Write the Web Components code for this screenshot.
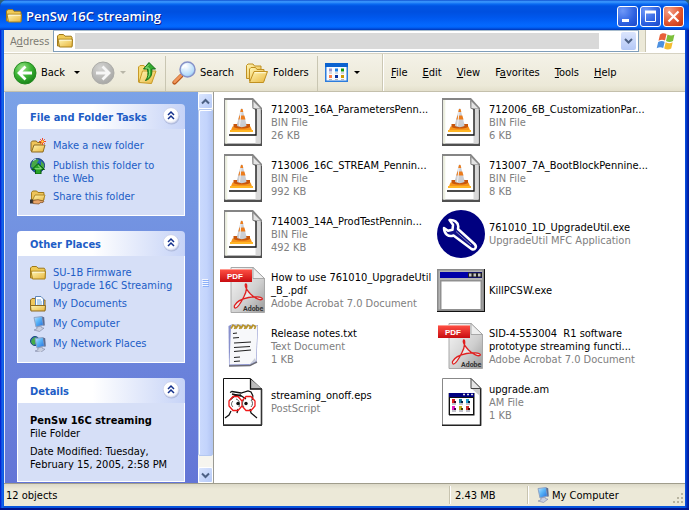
<!DOCTYPE html>
<html lang="en">
<head>
<meta charset="utf-8">
<title>PenSw 16C streaming</title>
<style>
html,body{margin:0;height:100%;background:#2c5f78}
body{font:11px/13px "DejaVu Sans Condensed","DejaVu Sans","Noto Sans",sans-serif;color:#000;overflow:hidden}
</style>
</head>
<body>
<xp-window caption="PenSw 16C streaming">
  <xp-addressbar slot="bars"></xp-addressbar>
  <xp-toolbar slot="bars"></xp-toolbar>
  <xp-sidebar>
    <xp-panel caption="File and Folder Tasks">
      <xp-link icon="newfolder">Make a new folder</xp-link>
      <xp-link icon="globe">Publish this folder to<br>the Web</xp-link>
      <xp-link icon="share">Share this folder</xp-link>
    </xp-panel>
    <xp-panel caption="Other Places">
      <xp-link icon="folder">SU-1B Firmware<br>Upgrade 16C Streaming</xp-link>
      <xp-link icon="docs">My Documents</xp-link>
      <xp-link icon="computer">My Computer</xp-link>
      <xp-link icon="network">My Network Places</xp-link>
    </xp-panel>
    <xp-panel caption="Details">
      <xp-details>
        <b slot="name">PenSw 16C streaming</b>
        <span slot="kind">File Folder</span>
        <span slot="date">Date Modified: Tuesday,<br>February 15, 2005, 2:58 PM</span>
      </xp-details>
    </xp-panel>
  </xp-sidebar>
  <xp-scrollbar></xp-scrollbar>
  <xp-files>
    <xp-file icon="cone" kind="BIN File" size="26 KB">712003_16A_ParametersPenn...</xp-file>
    <xp-file icon="cone" kind="BIN File" size="6 KB">712006_6B_CustomizationPar...</xp-file>
    <xp-file icon="cone" kind="BIN File" size="992 KB">713006_16C_STREAM_Pennin...</xp-file>
    <xp-file icon="cone" kind="BIN File" size="8 KB">713007_7A_BootBlockPennine...</xp-file>
    <xp-file icon="cone" kind="BIN File" size="492 KB">714003_14A_ProdTestPennin...</xp-file>
    <xp-file icon="wrench" kind="UpgradeUtil MFC Application">761010_1D_UpgradeUtil.exe</xp-file>
    <xp-file icon="pdf" kind="Adobe Acrobat 7.0 Document">How to use 761010_UpgradeUtil<br>_B_.pdf</xp-file>
    <xp-file icon="app">KillPCSW.exe</xp-file>
    <xp-file icon="notes" kind="Text Document" size="1 KB">Release notes.txt</xp-file>
    <xp-file icon="pdf" kind="Adobe Acrobat 7.0 Document">SID-4-553004&nbsp; R1 software<br>prototype streaming functi...</xp-file>
    <xp-file icon="eps" kind="PostScript">streaming_onoff.eps</xp-file>
    <xp-file icon="am" kind="AM File" size="1 KB">upgrade.am</xp-file>
  </xp-files>
  <xp-statusbar slot="status"></xp-statusbar>
</xp-window>

<script>
const FOLDER = `<path d="M.5 13V3l1.500-1.500h4.500L8 3.200h6.200l.8 1V13z" fill="#f0ca56" stroke="#a07a1c"/><path d="M2.500 14L1 6.200h14.500L15 14z" fill="url(#fy)" stroke="#a8801c"/><path d="M2.500 7.200h12" stroke="#fffbe0"/>`;
const FY = `<defs><linearGradient id="fy" x2="1" y2="1"><stop stop-color="#fff6b4"/><stop offset="1" stop-color="#e8b53c"/></linearGradient></defs>`;
const MONITOR = `<path d="M4 1.500l8-1 1.500 8.500-7.500 2z" fill="url(#mb)" stroke="#8fa3c4"/><path d="M12 .5l2.200.8.6 8-1.300.7z" fill="#5a6c94"/><path d="M7 11l4-1 .5 1.500 2.500.7-4.500 3.300L4 14l2.800-1z" fill="#c9cfe0" stroke="#7d86a4" stroke-width=".6"/>`;
const MB = `<defs><linearGradient id="mb" x2="1" y2="1"><stop stop-color="#bfe6ff"/><stop offset=".45" stop-color="#58b4f8"/><stop offset="1" stop-color="#2468d8"/></linearGradient></defs>`;
const gem = (x, y, c, d) => `<path d="M${x} ${y}h3v4h-3z" fill="${c}"/><path d="M${x + 2} ${y + 2}h2v2h-2z" fill="${d}"/><path d="M${x} ${y + 5}h4" stroke="#889"/>`;
const ICONS = {
  folder: [16, 16, FY + FOLDER],
  newfolder: [16, 16, FY + `<path d="M1 13V4.500L2.300 3h4l1.200 1.500h5V13z" fill="#eec45a" stroke="#8d6b22"/><path d="M1.500 14L4 7h11l-2 7z" fill="url(#fy)" stroke="#8d6b22"/><path d="M12.500 0v7M9 3.500h7M10.200 1.200l4.600 4.600M14.800 1.200l-4.600 4.600" stroke="#f04828"/><circle cx="12.500" cy="3.500" r="1.200" fill="#ffd94a"/>`],
  share: [16, 16, FY + `<path d="M1.500 11V3.500L2.700 2h4l1.200 1.500h6V11z" fill="#eec45a" stroke="#a07a1c"/><path d="M2.500 11L5 6h10l-2 6z" fill="url(#fy)" stroke="#b08a28"/><path d="M0 10.500h3v4H0z" fill="#333"/><path d="M3 11.500l5-.8 6 1.500-1 1.300-3 .2-1 1.300-6-.5z" fill="#e8a56a" stroke="#7a4a20" stroke-width=".7"/>`],
  globe: [16, 16, `<circle cx="7.500" cy="7.500" r="7" fill="#245fb8" stroke="#163a70"/><path d="M2 4l4-3 3 1-2 3 1 2-4 3-3-1zM11 3l3 3v4l-3-1z" fill="#48a848"/><path d="M3 2.500l3-1.500" stroke="#cfe8ff"/><path d="M8 5.500l6.500 6H11V16H5.500v-4.500h-3.500z" fill="#28a428" stroke="#075c0e"/><path d="M8 7.500l3.500 3.300H4.800" stroke="#9be88c" fill="none"/>`],
  docs: [16, 16, FY + `<path d="M.5 14V4L2 2.500h3L6 4h9v10z" fill="#efc75c" stroke="#8d6b22"/><path d="M5.500.5h5.500l2.500 2.500v8h-8z" fill="#fff" stroke="#5f86b8"/><path d="M7 4h4M7 6h5M7 8h5" stroke="#6fa8e4"/><path d="M1 15l-.5-5.500h15L15 15z" fill="url(#fy)" stroke="#8d6b22"/>`],
  computer: [16, 16, MB + MONITOR],
  network: [16, 16, MB + `<circle cx="5" cy="5" r="4.500" fill="#2c68c0" stroke="#1c4480"/><path d="M2 3l3-2 2 1-2 3 1 3-3 1-2-3z" fill="#44ac48"/><g transform="translate(1 1)">${MONITOR}</g>`],
  back: [24, 24, `<defs><radialGradient id="gback" cx=".38" cy=".28" r=".8"><stop stop-color="#9be48a"/><stop offset=".5" stop-color="#3cb434"/><stop offset="1" stop-color="#127a14"/></radialGradient></defs><circle cx="12" cy="12" r="11" fill="url(#gback)" stroke="#238a20"/><path d="M12.500 5.500L6 12l6.500 6.500M6.500 12H19" fill="none" stroke="#fff" stroke-width="2.800"/>`],
  fwd: [24, 24, `<defs><radialGradient id="gfwd" cx=".38" cy=".28" r=".8"><stop stop-color="#d4d4d2"/><stop offset="1" stop-color="#a4a4a2"/></radialGradient></defs><circle cx="12" cy="12" r="11" fill="url(#gfwd)" stroke="#acaca8"/><path d="M11.500 5.500L18 12l-6.500 6.500M17.500 12H5" fill="none" stroke="#f6f6f6" stroke-width="2.800"/>`],
  up: [20, 22, FY + `<path d="M1.500 20V5l1.500-1.500h4L8.500 6H14v14z" fill="#f6dc78" stroke="#c79a28"/><path d="M2 20.500L5.500 9H19l-4.500 12.500z" fill="url(#fy)" stroke="#c79a28"/><path d="M12 .5L18.500 7h-3.700c.5 6-1.300 10-6.300 11.500 2.500-3 3-6 2-11.500H6.500z" fill="#34ac30" stroke="#126a12"/><path d="M12 2.500L8.500 6h3.500c1 4 .8 7-.8 9.500" fill="none" stroke="#94e080"/>`],
  search: [24, 24, `<defs><radialGradient id="glens" cx=".4" cy=".3" r=".8"><stop stop-color="#fff"/><stop offset=".7" stop-color="#b6dcfa"/><stop offset="1" stop-color="#7cb4ec"/></radialGradient></defs><path d="M9 15L2.500 21.500" stroke="#b85418" stroke-width="4.200" stroke-linecap="round"/><path d="M9 14.500L2.500 21" stroke="#f0965a" stroke-width="2.500" stroke-linecap="round"/><circle cx="15.500" cy="8.500" r="7.500" fill="url(#glens)" stroke="#8792c8" stroke-width="1.500"/><path d="M10.500 7.500c.5-2 2-3.500 4-3.700" stroke="#fff" stroke-width="1.500" fill="none"/>`],
  folders: [24, 22, FY + `<path d="M1.500 16.500v-13L3 2h5l1.500 2H16v12.500z" fill="url(#fy)" stroke="#c09020"/><path d="M4.500 19V7L6 5.500h4.500L12 7.500h7V19z" fill="url(#fy)" stroke="#c09020"/><path d="M4.500 20.500L9 9.500h13.500L18.500 20.500z" fill="url(#fy)" stroke="#c09020"/><path d="M9.800 10.700h11" stroke="#fffbe0"/>`],
  views: [24, 20, `<path d="M.75.75h21.500v17.500H.75z" fill="#f8fbff" stroke="#2c7cdc" stroke-width="1.500"/><path d="M0 0h23v4H0z" fill="#0a62d0"/><path d="M4 5.500h3v3H4z" fill="#9a94cc"/><path d="M10 5.500h3v3h-3z" fill="#1c80e4"/><path d="M16 5.500h3v3h-3z" fill="#10960c"/><path d="M4 12h3v3H4z" fill="#ff7c44"/><path d="M10 12h3v3h-3z" fill="#0a30a0"/><path d="M16 12h3v3h-3z" fill="#d09a00"/><path d="M4 10h3m3 0h3m3 0h3M4 16.500h3m3 0h3m3 0h3" stroke="#b4b4bc"/>`],
  flag: [20, 18, `<path d="M4 2.500C6.500.5 8.500 1 10.500 2L9 8.500c-2-1-4-1.200-6.500.3z" fill="#e8603a"/><path d="M11.500 2.500c2.500 1.200 4.500 1.300 7 0L17 9c-2.500 1.300-4.500 1.200-7 0z" fill="#7cbf3c"/><path d="M2.200 10c2.500-1.500 4.500-1.200 6.500-.3L7.200 16c-2-1-4-1.200-6.500.3z" fill="#4c90e0"/><path d="M9.700 10.200c2.500 1.200 4.500 1.300 7 0L15.200 16.500c-2.500 1.300-4.500 1.200-7 0z" fill="#f4bc30"/>`],
  chevrons: [18, 18, `<defs><radialGradient id="gchev" cx=".45" cy=".4" r=".6"><stop offset=".7" stop-color="#fff"/><stop offset="1" stop-color="#dfe3f2"/></radialGradient></defs><circle cx="9.500" cy="9.500" r="8" fill="#9aa6cc" opacity=".6"/><circle cx="9" cy="8.500" r="7.800" fill="url(#gchev)" stroke="#c4cae4" stroke-width=".6"/><path d="M6 8l3-3 3 3M6 12l3-3 3 3" fill="none" stroke="#13308c" stroke-width="1.500"/>`],
  cone: [48, 48, `<path d="M5 0h29l9 10v38H5z" fill="#858585"/><path d="M5 45.500h38V48H5zM41.500 12H43v34h-1.500z" fill="#505050"/><path d="M6.300 2H33l8.500 10v33.500H6.300z" fill="#fff"/><path d="M6.300 2h2v43.500h-2z" fill="#edf0e0"/><path d="M33 2l8.500 9v5l-8-6z" fill="#9a9a9a"/><path d="M34 2.500l8 8h-8z" fill="#e4e4e4" stroke="#777" stroke-width=".8"/><path d="M36.500 10.500h5v35h-5z" fill="#d8d8d8"/><path d="M10 37h27V11" fill="none" stroke="#111" stroke-width="1.300"/><path d="M11.500 33.500l2-5h18l2 5z" fill="#f7941a"/><path d="M11 32h23v2H11z" fill="#ffb626"/><path d="M22 10.500h1.300l4.700 18c-2 2-8.700 2-10.700 0z" fill="#ccced4"/><path d="M22 11h1.500l.8 3h-3zM20.500 17.500h4.800l1.200 4h-7.200z" fill="#ec7c1c"/><path d="M14.500 26h3.500c2 1.500 7 1.500 9 0h4v3c-4 2-12.500 2-16.500 0z" fill="#c8560c"/><path d="M18.500 25c2.500 1.500 6 1.500 8.500 0l.5 3c-3 1.500-6.500 1.500-9.500 0z" fill="#c8ccd2"/><path d="M22 14l-1.500 14" stroke="#f4f4f6"/>`],
  wrench: [48, 48, `<circle cx="24" cy="24" r="24" fill="#000080"/><path d="M12.500 10c4.500-.5 8.500 2 8.800 6.500l-.3 2.500 16.500 15c3 3 .5 6.500-3 5L16.500 25.500c-5 2-9.500-1.500-9.500-7.500l4 2.800 4.500-1 .5-5z" fill="#10108a" stroke="#fff" stroke-width="2.500" stroke-linejoin="round"/><path d="M19 21.500l15 13.500" stroke="#8c8cb8" stroke-width="1"/>`],
  pdf: [48, 48, `<defs><linearGradient id="gpage" x2="1" y2="1"><stop stop-color="#f7f7f7"/><stop offset=".6" stop-color="#cfcfcf"/><stop offset="1" stop-color="#9a9a9a"/></linearGradient><linearGradient id="gtag" x2="0" y2="1"><stop stop-color="#ff5044"/><stop offset="1" stop-color="#c80c10"/></linearGradient></defs><path d="M12 1.500h22l11.500 11V46.500H12z" fill="url(#gpage)" stroke="#a8a8a8"/><path d="M34 1.500l11.500 11H34z" fill="#eee" stroke="#999" stroke-width=".8"/><path d="M15.500 39.500c2-4 7-6.500 14-8 6-1.300 13-.8 14 1.500-1.500 2.200-8-1-12-5-4-4.300-6-8-5-10 2-1 1.500 7-1.500 12.500-3 6-7 12-9 11.500-.8-.3-.8-1.300-.5-2.500z" fill="#fff" fill-opacity=".5" stroke="#e02020" stroke-width="1.300"/><path d="M1 3.500h32v12.500H1z" fill="url(#gtag)"/><path d="M1 3.500h32" stroke="#ff9a90"/><text x="8" y="13" font-family="Liberation Sans" font-weight="bold" font-size="8" fill="#fff">PDF</text><text x="24" y="45" font-family="Roboto,Liberation Sans" font-weight="bold" font-size="7" fill="#333">Adobe</text>`],
  app: [48, 48, `<path d="M0 3h48v43H0z" fill="#111"/><path d="M0 3h47v42H0z" fill="#8a8a8a"/><path d="M1.500 4.500h44v39h-44z" fill="#b4b4b4"/><path d="M3 6h42v6H3z" fill="#0000a8"/><path d="M31 6.500h14v5H31z" fill="#222"/><path d="M32 7.500h2.500v3H32zM36.500 7.500H39v3h-2.500zM41 7.500h2.500v3H41z" fill="#c4c4c4"/><path d="M3 14h42v30H3z" fill="#909090"/><path d="M4.500 15.500h39V43h-39z" fill="#fff"/>`],
  notes: [48, 48, `<path d="M9.500 4l3-1.500L39 3l-1.500 37L30 43l-20 1z" fill="#8890cc"/><path d="M12 3.500h26.500L37 39l-6 3-20.500.5z" fill="#f7f8fa"/><path d="M31 42l6-3-1-3z" fill="#c8ccd8"/><path d="M10 44l21-.5 7-3.500" fill="none" stroke="#6a6a74" stroke-width="1.500"/><path d="M12 6.500l2-3.500 2.500 1.500-1 2.500M17 6.500L19 3l2.500 1.500-1 2.500M22 6.500L24 3l2.500 1.500-1 2.500M27 6.500L29 3l2.500 1.500-1 2.500M32 6.500L34 3l2.500 1.500-1 2.500" fill="none" stroke="#b8942c" stroke-width="1.600"/><path d="M14 11.500l4-.5M14 16l6-.5M15 21l17-1M15 25.500l16-1M15 29.500l17-1.500M15 35.500l6-.5M15 39.500l6-.5" stroke="#222" stroke-width="1.200"/>`],
  eps: [48, 48, `<path d="M4.500.5H31.500L42.500 11v36.500h-38z" fill="#fff" stroke="#111"/><path d="M31.500 1v10H43" fill="#bbb" stroke="#111" stroke-width="1.300"/><path d="M4 47h39M42.500 11v36" stroke="#333" stroke-width="1.600"/><path d="M11 14.500l2-1 9 1.500 7-2 3 1 2 4M13 16l9 2M11 22l5-4.500 6-.5M21 17l6 4M34 18l-1 4M12 33l-2 4-4 3M19 31l-1 4M31 31l1 4 6 5" fill="none" stroke="#111" stroke-width="1.300"/><path d="M14 18.500h5l4 4.500v5l-4 4.500h-5l-4-4.500v-5zM27 18.500h5l4 4.500v5l-4 4.500h-5l-4-4.500v-5z" fill="none" stroke="#f01818" stroke-width="1.300"/><path d="M14 23c-2 2-2 4 0 6M17 21c3 1 4 3 3 8M25 22c-2 2-2 5 0 7M32 22c2 2 2 5 0 7" fill="none" stroke="#555"/><circle cx="19" cy="25.500" r="1.700" fill="#111"/><circle cx="27" cy="25.500" r="1.700" fill="#111"/>`],
  am: [48, 48, `<path d="M5.500.5H34l10 10v37H5.500z" fill="#fff" stroke="#888"/><path d="M5 47.300h39M43.500 11v37" stroke="#222" stroke-width="1.400"/><path d="M34 .5l10 10H34z" fill="#e6e6e6" stroke="#444"/><path d="M35 11l8 7v-7z" fill="#ccc"/><path d="M12 15h25.500v22.500H12z" fill="#111"/><path d="M13 20h23v16H13z" fill="#fff"/><path d="M12 15h25v4H12z" fill="#000080"/><path d="M26 16.500h2m2 0h2m2 0h2" stroke="#ddd" stroke-width="1.500"/><path d="M11.500 37V15" stroke="#aaa"/>` + gem(15, 21, '#e02020', '#402') + gem(22, 21, '#2080a0', '#024') + gem(29, 21, '#20a0d0', '#024') + gem(15, 28, '#e020c0', '#404') + gem(22, 28, '#c0b020', '#440') + gem(29, 28, '#d03030', '#400')],
};
const svg = n => { const [w, h, s] = ICONS[n]; return `<svg width="${w}" height="${h}" viewBox="0 0 ${w} ${h}" aria-hidden="true">${s}</svg>`; };
const define = (name, render) => customElements.define(name, class extends HTMLElement {
  constructor() {
    super();
    const t = document.createElement('template');
    t.innerHTML = '<style>:host,*{box-sizing:border-box}svg{display:block;flex:none}button{font:inherit;color:inherit;border:0;background:none;padding:0;margin:0}</style>' + render(this);
    this.attachShadow({mode: 'open'}).append(t.content.cloneNode(true));
  }
});

define('xp-window', el => `<style>
:host{display:flex;flex-direction:column;height:100vh;padding:0 4px 4px;border-radius:7px 7px 0 0;background:linear-gradient(90deg,#0019cf 0,#0831d9 1px,#166aee 2px,#0855dd 4px,#0855dd calc(100% - 4px),#0441d8 calc(100% - 3px),#001ea0 calc(100% - 1px));box-shadow:inset 0 -2px #00138c}
header{display:flex;align-items:center;height:30px;margin:0 -4px;padding:2px 5px 0 6px;border-radius:7px 7px 0 0;background:linear-gradient(#0a3fc4 0,#2f8df8 1px,#3c96fc 2px,#0a6cf2 4px,#0054e3 6px,#0050e0 12px,#0058ee 18px,#0468fe 25px,#0266fc 27px,#0048d4 29px,#0036b4 30px)}
h1{flex:1;margin:0 0 0 4px;font:600 13px/18px "Open Sans","Noto Sans",sans-serif;color:#fff;text-shadow:1px 1px #0a1e8c;white-space:nowrap}
nav{display:flex;gap:2px}
nav button{width:21px;height:21px;border:1px solid #fff;border-radius:3px;background:radial-gradient(circle at 25% 20%,#6f98f8,#2c60e0 60%,#1c48c8)}
nav .x{background:radial-gradient(circle at 25% 20%,#f4a088,#e0522c 60%,#c03410)}
main{flex:1;display:flex;min-height:0;background:#fff}
</style><header>${svg('folder')}<h1>${el.getAttribute('caption')}</h1><nav>
<button aria-label="Minimize"><svg width="19" height="19"><path d="M4 12h7v3H4z" fill="#fff"/></svg></button>
<button aria-label="Maximize"><svg width="19" height="19"><path d="M4.500 4.500h10v10h-10z" fill="none" stroke="#fff"/><path d="M4 5h11" stroke="#fff" stroke-width="3"/></svg></button>
<button class="x" aria-label="Close"><svg width="19" height="19"><path d="M4.500 4.500l10 10M14.500 4.500l-10 10" stroke="#fff" stroke-width="2.200"/></svg></button>
</nav></header><slot name="bars"></slot><main><slot></slot></main><slot name="status"></slot>`);

define('xp-addressbar', () => `<style>
:host{display:flex;height:24px;padding-bottom:1px;background:#fff;border-bottom:1px solid #d6d2c2}
label{width:49px;padding:5px 0 0 6px;color:#7d7b72;background:#f0eee2;line-height:13px}
.box{flex:1;display:flex;align-items:center;height:22px;padding:0 2px 0 3px;border:1px solid #7f9db9;border-top-color:#a8bccd;background:#fff}
input{flex:1;min-width:0;height:16px;margin:0 22px 0 2px;padding:0;border:0;background:#d9d9d9;font:inherit}
button{width:15px;height:18px;border-radius:2px;background:linear-gradient(#dbe5fd,#b4c8f6)}
.gap{width:7px;background:#ece9d8;border-right:1px solid #c8c4b0}
.logo{width:39px;display:grid;place-items:center;background:#fff}
</style><label for="a">A<u>d</u>dress</label><div class="box">${svg('folder')}<input id="a"><button aria-label="Show addresses"><svg width="15" height="18"><path d="M4 7l3.500 3.500L11 7" fill="none" stroke="#4d6185" stroke-width="2"/></svg></button></div><div class="gap"></div><div class="logo">${svg('flag')}</div>`);

define('xp-toolbar', () => `<style>
:host{display:flex;height:38px;background:linear-gradient(#f4f2e8,#ece9d8 85%,#e4e0cc);border-bottom:1px solid #c4c0ac}
div{display:flex;align-items:center}
.tools{width:379px;padding-left:9px;white-space:nowrap;border-right:1px solid #ccc8b4}
button{display:flex;align-items:center;gap:4px}
.arr{width:0;border:3px solid transparent;border-top-color:#000;border-bottom:0;margin-left:5px}
.fwd{margin-left:11px;gap:0}.fwd .arr{border-top-color:#b8b6a8}
.up{margin-left:11px}
hr{align-self:stretch;width:1px;margin:2px 6px 0 8px;border:0;background:#c9c6b2}
.f{margin-left:11px}.views{margin-left:1px;gap:0}
.menu{flex:1;gap:15px;padding-left:7px;border-left:1px solid #fff}
</style><div class="tools"><button>${svg('back')}Back<span class="arr"></span></button>
<button class="fwd" disabled aria-label="Forward">${svg('fwd')}<span class="arr"></span></button>
<button class="up" aria-label="Up">${svg('up')}</button><hr>
<button>${svg('search')}Search</button>
<button class="f">${svg('folders')}Folders</button><hr>
<button class="views" aria-label="Views">${svg('views')}<span class="arr"></span></button></div>
<div class="menu"><button><span><u>F</u>ile</span></button><button><span><u>E</u>dit</span></button><button><span><u>V</u>iew</span></button><button><span>F<u>a</u>vorites</span></button><button><span><u>T</u>ools</span></button><button><span><u>H</u>elp</span></button></div>`);

define('xp-sidebar', () => `<style>
:host{display:flex;flex-direction:column;gap:15px;flex:none;width:194px;padding:12px 13px 0 12px;border-left:1px solid #dfe6f8;overflow:hidden;background:linear-gradient(#7ba2e7,#6375d6)}
</style><slot></slot>`);

define('xp-panel', el => `<style>
:host{display:block;flex:none}
header{display:flex;align-items:center;justify-content:space-between;height:25px;padding:0 5px 2px 13px;border-radius:4px 4px 0 0;background:linear-gradient(90deg,#fff 45%,#c6d3f7)}
h2{margin:4px 0 0;font:bold 11px/13px "DejaVu Sans Condensed","DejaVu Sans",sans-serif;color:#215dc6;white-space:nowrap}
section{display:flex;flex-direction:column;gap:4px;padding:9px 0 10px 12px;border:solid #fff;border-width:0 1px 1px;background:#d6dff7}
</style><header><h2>${el.getAttribute('caption')}</h2><button aria-label="Collapse">${svg('chevrons')}</button></header><section><slot></slot></section>`);

define('xp-link', el => `<style>
:host{display:block}
a{display:flex;gap:7px;min-height:16px;color:#215dc6;text-decoration:none;white-space:nowrap}
span{padding-top:1px}
</style><a href="#">${svg(el.getAttribute('icon'))}<span><slot></slot></span></a>`);

define('xp-details', () => `<style>
:host{display:flex;flex-direction:column;padding-top:2px;white-space:nowrap}
.date{padding-top:5px}
</style><slot name="name"></slot><slot name="kind"></slot><div class="date"><slot name="date"></slot></div>`);

define('xp-scrollbar', () => `<style>
:host{display:flex;flex-direction:column;flex:none;width:16px;padding:1px 0 0;border-right:1px solid #9a9a94;background:#f6f5ef}
button{display:grid;place-items:center;height:16px;border-radius:2px;background:linear-gradient(135deg,#dbe6fe,#b6caf8);border:1px solid #fff}
.thumb{flex:1;margin:0 0 11px;border:1px solid #b4c8f0;box-shadow:inset 1px 1px #fff;border-radius:2px;background:linear-gradient(90deg,#cbdafd,#c3d4fc 60%,#b4c6f4)}
</style><button aria-label="Scroll up"><svg width="9" height="7"><path d="M1 5.500L4.500 2 8 5.500" fill="none" stroke="#4d6185" stroke-width="2"/></svg></button>
<button class="thumb" aria-label="Scroll position"><svg width="7" height="8"><path d="M0 .5h6M0 2.500h6M0 4.500h6M0 6.500h6" stroke="#f2f6ff"/><path d="M1 1.500h6M1 3.500h6M1 5.500h6M1 7.500h6" stroke="#8cb0f8"/></svg></button>
<button aria-label="Scroll down"><svg width="9" height="7"><path d="M1 1.500L4.500 5 8 1.500" fill="none" stroke="#4d6185" stroke-width="2"/></svg></button>`);

define('xp-files', () => `<style>
:host{flex:1;display:grid;grid-template-columns:repeat(auto-fill,214px);grid-auto-rows:48px;gap:8px 4px;padding:6px 0 0 5px;min-width:0;overflow:hidden}
</style><slot></slot>`);

define('xp-file', el => `<style>
:host{display:flex;align-items:center;gap:4px;white-space:nowrap}
.meta{color:#808080}
</style>${svg(el.getAttribute('icon'))}<div><div><slot></slot></div>${['kind', 'size'].filter(k => el.hasAttribute(k)).map(k => `<div class="meta">${el.getAttribute(k)}</div>`).join('')}</div>`);

define('xp-statusbar', () => `<style>
:host{display:flex;flex:none;height:23px;background:linear-gradient(#dcd9c8,#ece9d8 5px);border-top:1px solid #a09d8c}
div{display:flex;align-items:center;gap:2px;box-shadow:inset 1px 0 #fff,-1px 0 #c8c4b0;margin:2px 0;padding-left:5px}
.n{flex:1;box-shadow:none;padding-left:2px}.s{width:78px}.c{width:157px;padding-left:6px}
span{flex:1}
svg:last-child{align-self:end}
</style><div class="n">12 objects</div><div class="s">2.43 MB</div><div class="c">${svg('computer')}<span>My Computer</span><svg width="14" height="12"><path d="M10 9h2v2h-2zM6 9h2v2H6zM2 9h2v2H2zM10 5h2v2h-2zM6 5h2v2H6zM10 1h2v2h-2z" fill="#b8b4a0"/></svg></div>`);
</script>
</body>
</html>
